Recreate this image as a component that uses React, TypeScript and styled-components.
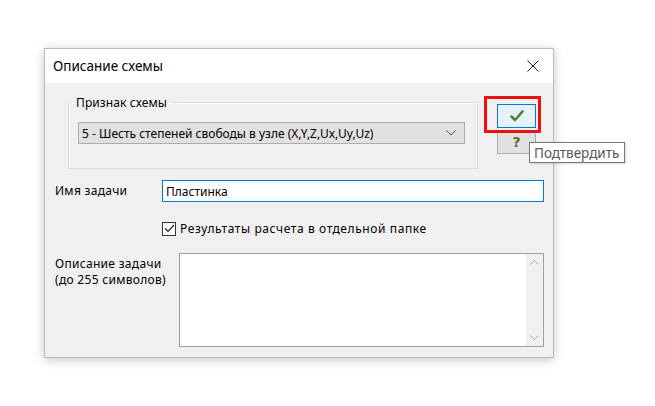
import React from 'react';
import styled, { createGlobalStyle } from 'styled-components';

const GlobalStyle = createGlobalStyle`
  html, body {
    margin: 0;
    padding: 0;
    background: #ffffff;
  }
  body {
    font-family: "Noto Sans", "Open Sans", Arial, sans-serif;
    font-size: 12px;
    color: #000;
  }
`;

const Page = styled.div`
  width: 655px;
  height: 406px;
  padding: 48px 0 0 44px;
  box-sizing: border-box;
`;

const Dialog = styled.div`
  width: 510px;
  height: 310px;
  background: #f0f0f0;
  border: 1px solid #b9b9b9;
  box-sizing: border-box;
  box-shadow: 0 2px 10px rgba(0, 0, 0, 0.22);
  display: flex;
  flex-direction: column;
`;

const TitleBar = styled.div`
  height: 34px;
  background: #ffffff;
  display: flex;
  align-items: center;
  justify-content: space-between;
  padding: 0 14px 0 8px;
  flex-shrink: 0;
`;

const Title = styled.span`
  font-size: 13.5px;
  color: #000;
`;

const CloseIcon = styled.svg`
  width: 12px;
  height: 12px;
`;

const Body = styled.div`
  position: relative;
  display: flex;
  flex-direction: column;
  padding: 11px 9px 0 10px;
`;

const TopRow = styled.div`
  display: flex;
  align-items: flex-start;
  gap: 19px;
  margin-left: 13px;
`;

const Group = styled.fieldset`
  width: 410px;
  height: 75px;
  margin: 0;
  padding: 11px 12px 0 9px;
  box-sizing: border-box;
  border: 1px solid #dcdcdc;
  box-shadow: inset 1px 1px 0 #ffffff;
`;

const Legend = styled.legend`
  padding: 0 4px;
  margin-left: -6px;
  font-size: 12px;
  letter-spacing: 0.1px;
`;

const Select = styled.div`
  height: 22px;
  background: #e1e1e1;
  border: 1px solid #adadad;
  box-sizing: border-box;
  display: flex;
  align-items: center;
  justify-content: space-between;
  padding: 0 8px 0 3px;
  white-space: nowrap;
`;

const Chevron = styled.svg`
  width: 10px;
  height: 6px;
`;

const ButtonColumn = styled.div`
  display: flex;
  flex-direction: column;
  gap: 2px;
  margin-top: 10px;
  position: relative;
`;

const ToolButton = styled.div<{ $active?: boolean }>`
  width: 39px;
  height: 24px;
  box-sizing: border-box;
  display: flex;
  align-items: center;
  justify-content: center;
  background: ${p => (p.$active ? '#e5f1fb' : '#e1e1e1')};
  border: 1px solid ${p => (p.$active ? '#0078d7' : '#adadad')};
`;

const Question = styled.span`
  font-family: "DejaVu Sans", sans-serif;
  font-weight: 700;
  font-size: 14px;
  line-height: 14px;
  color: #5c6e27;
`;

const Highlight = styled.div`
  position: absolute;
  left: -13px;
  top: -8px;
  width: 57px;
  height: 37px;
  border: 3px solid #ee1111;
  box-sizing: border-box;
  pointer-events: none;
`;

const Tooltip = styled.div`
  position: absolute;
  left: 32px;
  top: 38px;
  padding: 1px 5px 0 4px;
  height: 21px;
  box-sizing: border-box;
  background: #ffffff;
  border: 1px solid #767676;
  color: #575757;
  font-size: 13.5px;
  line-height: 18px;
  white-space: nowrap;
  box-shadow: 1px 1px 2px rgba(0, 0, 0, 0.15);
`;

const FieldRow = styled.div<{ $top: number }>`
  display: flex;
  align-items: flex-start;
  margin-top: ${p => p.$top}px;
`;

const Label = styled.div<{ $width: number }>`
  width: ${p => p.$width}px;
  padding-top: 3px;
  line-height: 16px;
  letter-spacing: 0.3px;
  flex-shrink: 0;
`;

const Input = styled.div`
  flex: 1;
  height: 22px;
  box-sizing: border-box;
  background: #ffffff;
  border: 1px solid #0078d7;
  padding: 2px 3px;
`;

const CheckRow = styled.div`
  display: flex;
  align-items: center;
  gap: 4px;
  margin: 18px 0 0 107px;
`;

const CheckText = styled.span`
  letter-spacing: 0.6px;
`;

const CheckBox = styled.div`
  width: 14px;
  height: 14px;
  box-sizing: border-box;
  border: 1px solid #333333;
  background: #ffffff;
  display: flex;
  align-items: center;
  justify-content: center;
`;

const Memo = styled.div`
  flex: 1;
  height: 94px;
  box-sizing: border-box;
  background: #ffffff;
  border: 1px solid #a0a0a0;
  display: flex;
  justify-content: flex-end;
`;

const ScrollBar = styled.div`
  width: 17px;
  background: #f0f0f0;
  display: flex;
  flex-direction: column;
  justify-content: space-between;
  align-items: center;
  padding: 6px 0;
`;

const ScrollArrow = styled.svg`
  width: 9px;
  height: 5px;
`;

export default function App() {
  return (
    <>
      <GlobalStyle />
      <Page>
        <Dialog>
          <TitleBar>
            <Title>Описание схемы</Title>
            <CloseIcon viewBox="0 0 12 12">
              <path d="M0.5 0.5 L11.5 11.5 M11.5 0.5 L0.5 11.5" stroke="#222" strokeWidth="1" />
            </CloseIcon>
          </TitleBar>
          <Body>
            <TopRow>
              <Group>
                <Legend>Признак схемы</Legend>
                <Select>
                  <span>5 - Шесть степеней свободы в узле (X,Y,Z,Ux,Uy,Uz)</span>
                  <Chevron viewBox="0 0 10 6">
                    <path d="M0.5 0.5 L5 5 L9.5 0.5" fill="none" stroke="#555" strokeWidth="1" />
                  </Chevron>
                </Select>
              </Group>
              <ButtonColumn>
                <ToolButton $active>
                  <svg width="14" height="12" viewBox="0 0 14 12">
                    <path d="M1.5 6.5 L5 10 L12.5 1.5" fill="none" stroke="#557f2a" strokeWidth="2.6" strokeLinecap="round" strokeLinejoin="round" />
                  </svg>
                </ToolButton>
                <ToolButton>
                  <Question>?</Question>
                </ToolButton>
                <Highlight />
                <Tooltip>Подтвердить</Tooltip>
              </ButtonColumn>
            </TopRow>
            <FieldRow $top={11}>
              <Label $width={107}>Имя задачи</Label>
              <Input>Пластинка</Input>
            </FieldRow>
            <CheckRow>
              <CheckBox>
                <svg width="11" height="9" viewBox="0 0 11 9">
                  <path d="M1 4.5 L4 7.5 L10 1" fill="none" stroke="#222" strokeWidth="1.2" />
                </svg>
              </CheckBox>
              <CheckText>Результаты расчета в отдельной папке</CheckText>
            </CheckRow>
            <FieldRow $top={16}>
              <Label $width={124}>
                Описание задачи
                <br />
                (до 255 символов)
              </Label>
              <Memo>
                <ScrollBar>
                  <ScrollArrow viewBox="0 0 9 5">
                    <path d="M0.5 4.5 L4.5 0.5 L8.5 4.5" fill="none" stroke="#a6a6a6" strokeWidth="1" />
                  </ScrollArrow>
                  <ScrollArrow viewBox="0 0 9 5">
                    <path d="M0.5 0.5 L4.5 4.5 L8.5 0.5" fill="none" stroke="#a6a6a6" strokeWidth="1" />
                  </ScrollArrow>
                </ScrollBar>
              </Memo>
            </FieldRow>
          </Body>
        </Dialog>
      </Page>
    </>
  );
}
